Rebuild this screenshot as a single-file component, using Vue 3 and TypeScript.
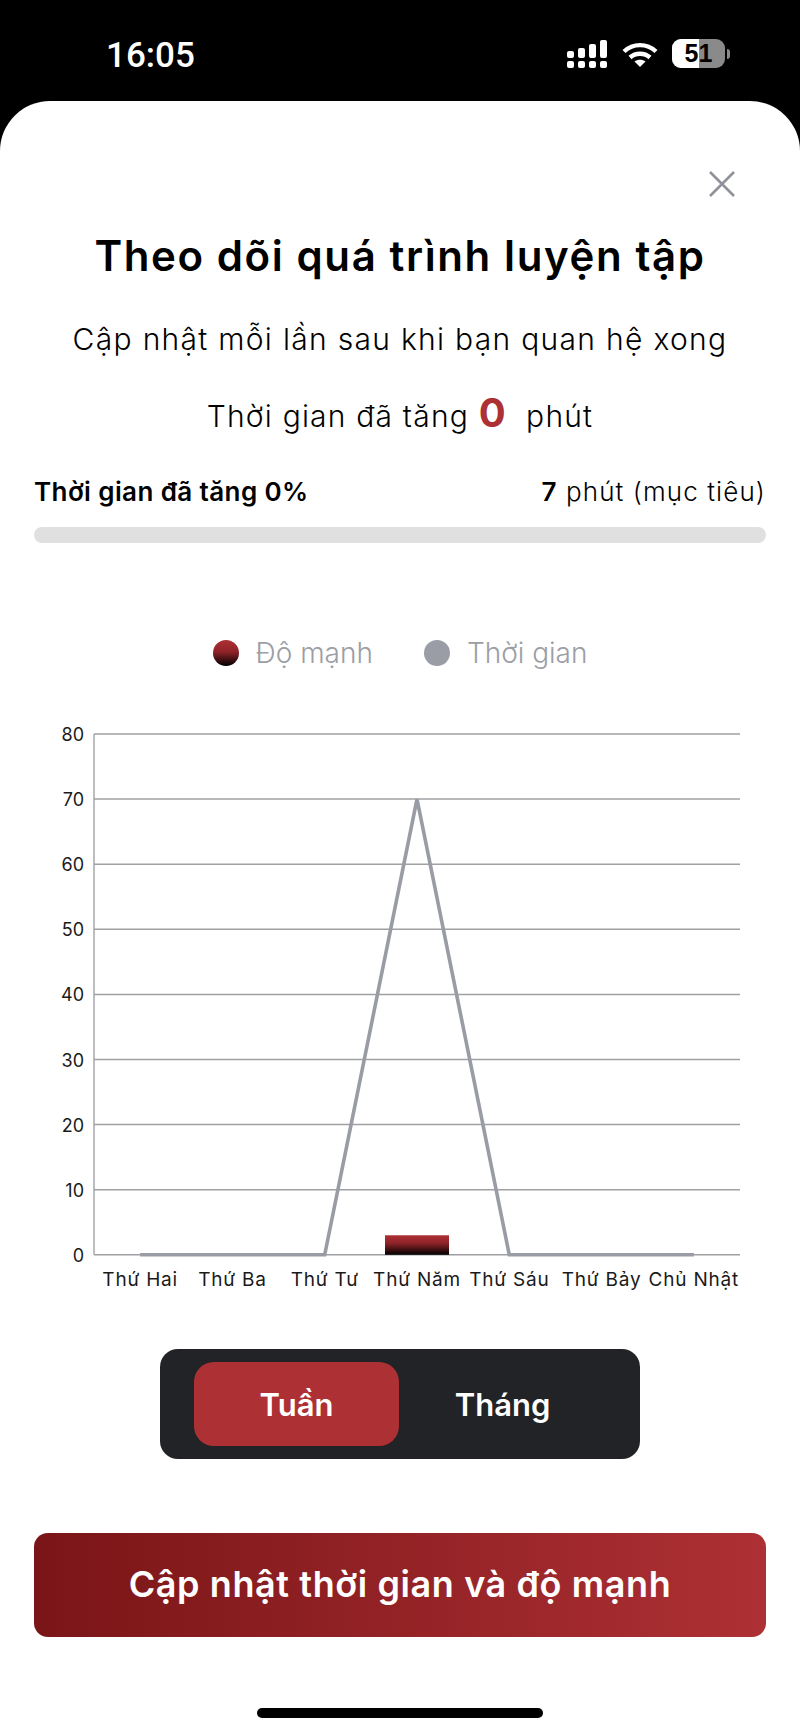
<script setup lang="ts">
import { ref } from "vue";

const days = ["Thứ Hai", "Thứ Ba", "Thứ Tư", "Thứ Năm", "Thứ Sáu", "Thứ Bảy", "Chủ Nhật"];
const duration = [0, 0, 0, 70, 0, 0, 0];
const ticks = [80, 70, 60, 50, 40, 30, 20, 10, 0];

const left = 94;
const right = 740;
const top = 14;
const step = 65.1;
const bandWidth = (right - left) / 7;

const valueY = (v: number) => top + ((80 - v) / 10) * step;
const dayX = (i: number) => left + bandWidth * (i + 0.5);

const linePoints = duration.map((v, i) => `${dayX(i)},${valueY(v)}`).join(" ");
const range = ref("week");
</script>

<template>
  <div class="phone">
    <header class="status">
      <span class="clock">16:05</span>
      <div class="status-icons">
        <svg class="signal" width="41" height="28" viewBox="0 0 41 28" fill="#fff">
          <rect x="0" y="11" width="7" height="7" rx="2" />
          <rect x="11" y="8" width="7" height="10" rx="2" />
          <rect x="22" y="4" width="7" height="14" rx="2" />
          <rect x="33" y="0" width="7" height="18" rx="2" />
          <rect x="0" y="21" width="7" height="7" rx="2" />
          <rect x="11" y="21" width="7" height="7" rx="2" />
          <rect x="22" y="21" width="7" height="7" rx="2" />
          <rect x="33" y="21" width="7" height="7" rx="2" />
        </svg>
        <svg class="wifi" width="36" height="25" viewBox="0 0 36 25" fill="none" stroke="#fff" stroke-width="4.4">
          <path d="M2 9.5C11 1 25 1 34 9.5" />
          <path d="M8 15.5C13.5 10.5 22.5 10.5 28 15.5" />
          <path d="M18 25L12.5 19.6C15.5 17.2 20.5 17.2 23.5 19.6Z" fill="#fff" stroke="none" />
        </svg>
        <div class="battery">
          <div class="battery-body">
            <div class="battery-fill"></div>
            <span class="battery-level">51</span>
          </div>
          <div class="battery-tip"></div>
        </div>
      </div>
    </header>

    <main class="sheet">
      <div class="close-row">
        <svg width="26" height="26" viewBox="0 0 26 26" stroke="#8f9399" stroke-width="2.6">
          <path d="M1 1L25 25M25 1L1 25" />
        </svg>
      </div>

      <h1 class="title">Theo dõi quá trình luyện tập</h1>
      <p class="subtitle">Cập nhật mỗi lần sau khi bạn quan hệ xong</p>
      <p class="gain">Thời gian đã tăng <b class="gain-value">0</b>&nbsp; phút</p>

      <div class="progress-head">
        <strong>Thời gian đã tăng 0%</strong>
        <span class="goal"><strong>7</strong> phút (mục tiêu)</span>
      </div>
      <div class="progress-track"></div>

      <div class="legend">
        <div class="legend-item">
          <i class="dot dot-red"></i>
          <span>Độ mạnh</span>
        </div>
        <div class="legend-item">
          <i class="dot dot-grey"></i>
          <span>Thời gian</span>
        </div>
      </div>

      <svg class="chart" width="800" height="572" viewBox="0 0 800 572">
        <defs>
          <linearGradient id="barFill" x1="0" y1="0" x2="0" y2="1">
            <stop offset="0" stop-color="#ad3034" />
            <stop offset="0.4" stop-color="#8f2328" />
            <stop offset="1" stop-color="#000" />
          </linearGradient>
        </defs>
        <line :x1="left" :x2="left" :y1="top" :y2="valueY(0)" stroke="#a8a8ab" stroke-width="1.5" />
        <g v-for="t in ticks" :key="t">
          <line :x1="left" :x2="right" :y1="valueY(t)" :y2="valueY(t)" stroke="#a0a0a4" stroke-width="1.5" />
          <text class="tick" x="84" :y="valueY(t) + 7" text-anchor="end">{{ t }}</text>
        </g>
        <polyline :points="linePoints" fill="none" stroke="#999ca4" stroke-width="3.6" />
        <rect x="385" :y="valueY(3)" width="64" :height="valueY(0) - valueY(3)" fill="url(#barFill)" />
        <text v-for="(d, i) in days" :key="d" class="tick day" :x="dayX(i)" :y="valueY(0) + 31" text-anchor="middle">{{ d }}</text>
      </svg>

      <div class="range">
        <button class="range-btn" :class="{ active: range === 'week' }" @click="range = 'week'">Tuần</button>
        <button class="range-btn" :class="{ active: range === 'month' }" @click="range = 'month'">Tháng</button>
      </div>

      <button class="update">Cập nhật thời gian và độ mạnh</button>

      <div class="home-bar"></div>
    </main>
  </div>
</template>

<style>
html,
body {
  margin: 0;
  background: #000;
}
</style>

<style scoped>
.phone {
  width: 800px;
  height: 1733px;
  display: flex;
  flex-direction: column;
  background: #000;
  font-family: Inter, "Noto Sans", sans-serif;
  overflow: hidden;
}

.status {
  height: 101px;
  flex: none;
  box-sizing: border-box;
  padding: 39px 70px 0 106px;
  display: flex;
  justify-content: space-between;
  align-items: flex-start;
}

.clock {
  margin-top: 2px;
  font-family: Roboto, sans-serif;
  font-weight: 500;
  font-size: 35px;
  line-height: 30px;
  color: #fff;
}

.status-icons {
  display: flex;
  align-items: center;
  gap: 14px;
}

.wifi {
  margin-top: 2px;
}

.battery {
  display: flex;
  align-items: center;
  gap: 2px;
}

.battery-body {
  position: relative;
  width: 53px;
  height: 29px;
  border-radius: 9px;
  background: #8a8a8a;
  overflow: hidden;
}

.battery-fill {
  width: 27px;
  height: 100%;
  background: #fff;
}

.battery-level {
  position: absolute;
  inset: 0;
  text-align: center;
  font-family: "Liberation Sans", sans-serif;
  font-weight: 700;
  font-size: 25px;
  line-height: 29px;
  color: #000;
}

.battery-tip {
  width: 3px;
  height: 10px;
  border-radius: 0 3px 3px 0;
  background: #8a8a8a;
}

.sheet {
  flex: 1;
  background: #fff;
  border-radius: 50px 50px 0 0;
  box-sizing: border-box;
  padding-top: 70px;
  display: flex;
  flex-direction: column;
  align-items: center;
  color: #000;
}

.close-row {
  align-self: flex-end;
  height: 26px;
  padding-right: 65px;
}

.title {
  margin: 29px 0 0;
  font-size: 42px;
  line-height: 60px;
  font-weight: 600;
  letter-spacing: 1.6px;
  text-align: center;
}

.subtitle {
  margin: 32px 0 0;
  font-size: 30px;
  line-height: 42px;
  font-weight: 300;
  letter-spacing: 1.3px;
}

.gain {
  margin: 28px 0 0;
  font-size: 30px;
  line-height: 50px;
  font-weight: 300;
  letter-spacing: 1.2px;
}

.gain-value {
  font-size: 40px;
  font-weight: 700;
  color: #ad3034;
}

.progress-head {
  width: 732px;
  margin-top: 32px;
  display: flex;
  justify-content: space-between;
  align-items: baseline;
  font-size: 26px;
  line-height: 38px;
  font-weight: 300;
  letter-spacing: 0.4px;
}

.progress-head strong {
  font-weight: 600;
}

.goal {
  letter-spacing: 1.1px;
}

.progress-track {
  width: 732px;
  height: 16px;
  margin-top: 16px;
  border-radius: 8px;
  background: #e0e0e0;
}

.legend {
  margin-top: 90px;
  display: flex;
  gap: 51px;
  font-size: 28px;
  line-height: 40px;
  font-weight: 300;
  color: #9b9ea5;
}

.legend-item {
  display: flex;
  align-items: center;
  gap: 17px;
}

.dot {
  width: 26px;
  height: 26px;
  border-radius: 50%;
}

.dot-red {
  background: linear-gradient(#ad3034 0%, #8f2328 45%, #000 100%);
}

.dot-grey {
  background: #9a9da6;
}

.chart {
  display: block;
  margin-top: 47px;
}

.tick {
  font-size: 18px;
  font-weight: 400;
  fill: #1a1a1a;
  font-family: Inter, "Noto Sans", sans-serif;
}

.day {
  font-size: 19px;
  letter-spacing: 0.8px;
}

.range {
  width: 480px;
  height: 110px;
  box-sizing: border-box;
  margin-top: 57px;
  padding: 13px 34px;
  display: grid;
  grid-template-columns: 205px 1fr;
  border-radius: 18px;
  background: #222326;
}

.range-btn {
  border: 0;
  border-radius: 20px;
  background: transparent;
  color: #fff;
  font: 600 31px Inter, "Noto Sans", sans-serif;
}

.range-btn.active {
  background: #ad3034;
}

.update {
  width: 732px;
  height: 104px;
  margin-top: 74px;
  padding-bottom: 4px;
  flex: none;
  border: 0;
  border-radius: 14px;
  background: linear-gradient(90deg, #7a1517, #ad3034);
  color: #fff;
  font: 600 36px Inter, "Noto Sans", sans-serif;
  letter-spacing: 0.6px;
}

.home-bar {
  width: 286px;
  height: 10px;
  margin-top: 71px;
  flex: none;
  border-radius: 5px;
  background: #000;
}
</style>
